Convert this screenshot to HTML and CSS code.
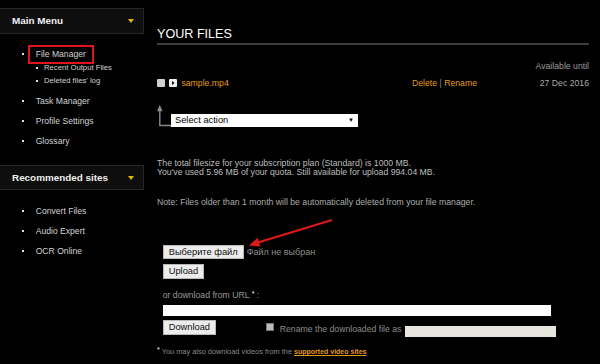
FILE: index.html
```html
<!DOCTYPE html>
<html lang="en">
<head>
<meta charset="utf-8">
<title>Your files</title>
<link rel="stylesheet" href="styles.css">
</head>
<body>
<aside class="sidebar">
  <section class="box">
    <h2 class="box-head">Main Menu <span class="caret"></span></h2>
    <ul class="menu">
      <li><a class="link marked">File Manager</a>
        <ul class="submenu">
          <li><a class="link">Recent Output Files</a></li>
          <li><a class="link">Deleted files' log</a></li>
        </ul>
      </li>
      <li><a class="link">Task Manager</a></li>
      <li><a class="link">Profile Settings</a></li>
      <li><a class="link">Glossary</a></li>
    </ul>
  </section>
  <section class="box">
    <h2 class="box-head">Recommended sites <span class="caret"></span></h2>
    <ul class="menu">
      <li><a class="link">Convert Files</a></li>
      <li><a class="link">Audio Expert</a></li>
      <li><a class="link">OCR Online</a></li>
    </ul>
  </section>
</aside>

<main class="content">
  <h1 class="title">YOUR FILES</h1>
  <div class="avail">Available until</div>
  <div class="file-row">
    <div class="file-left">
      <span class="cb"></span>
      <span class="play"><svg width="8" height="8" viewBox="0 0 8 8"><path d="M3 2 L5.5 4 L3 6 Z" fill="#000"/></svg></span>
      <a class="orange">sample.mp4</a>
    </div>
    <div class="actions"><a class="orange">Delete</a> <span class="sep">|</span> <a class="orange">Rename</a></div>
    <div class="date">27 Dec 2016</div>
  </div>
  <div class="bulk">
    <svg class="bulk-arrow" width="15" height="24" viewBox="0 0 15 24">
      <path d="M3 1 L6 8 L0 8 Z" fill="#8a8a8a"/>
      <path d="M3 7 V23.2 H15" fill="none" stroke="#8a8a8a" stroke-width="1.5"/>
    </svg>
    <div class="select">Select action <span class="sel-arrow">▼</span></div>
  </div>
  <p class="quota">The total filesize for your subscription plan (Standard) is 1000 MB.<br>You've used 5.96 MB of your quota. Still available for upload 994.04 MB.</p>
  <p class="note">Note: Files older than 1 month will be automatically deleted from your file manager.</p>

  <form class="upload">
    <div class="file-pick"><span class="btn">Выберите файл</span><span class="nofile">Файл не выбран</span></div>
    <div class="row-btn"><span class="btn">Upload</span></div>
    <div class="url-label">or download from URL <span class="star">*</span> :</div>
    <div class="url-input"></div>
    <div class="dl-row">
      <span class="btn btn-dl">Download</span>
      <span class="cb2"></span>
      <span class="rename-label">Rename the downloaded file as</span>
      <span class="rename-input"></span>
    </div>
    <div class="foot"><span class="star">*</span> You may also download videos from the <a class="sites">supported video sites</a></div>
  </form>

  <svg class="red-arrow" width="90" height="35" viewBox="0 0 90 35">
    <line x1="85" y1="5" x2="11" y2="27.5" stroke="#e01818" stroke-width="2"/>
    <path d="M2 30.5 L13.4 31.6 L10.6 22.8 Z" fill="#e01818"/>
  </svg>
</main>
</body>
</html>
```

FILE: styles.css
```css
html, body {
  margin: 0;
  padding: 0;
  background: #000;
}
body {
  display: flex;
  align-items: flex-start;
  font-family: "Liberation Sans", Arial, sans-serif;
  color: #bbb;
  width: 600px;
  height: 364px;
  overflow: hidden;
}

/* Sidebar */
.sidebar {
  width: 144px;
  flex: none;
  padding-top: 8px;
}
.box + .box {
  margin-top: 17px;
}
.box-head {
  margin: 0;
  height: 25.5px;
  box-sizing: border-box;
  border: 1px solid #262626;
  border-left: none;
  background: #0e0e0e;
  display: flex;
  align-items: center;
  justify-content: space-between;
  padding: 0 9px 0 12px;
  font-size: 9.9px;
  font-weight: bold;
  color: #eee;
}
.caret {
  width: 0;
  height: 0;
  border-left: 3px solid transparent;
  border-right: 3px solid transparent;
  border-top: 4px solid #e8b400;
}
.menu {
  list-style: none;
  margin: 0;
  padding: 13.5px 0 0 0;
}
.menu > li {
  position: relative;
  padding-left: 35.7px;
  line-height: 14px;
  font-size: 8.6px;
}
.menu > li + li {
  margin-top: 6px;
}
.menu > li::before {
  content: "";
  position: absolute;
  left: 22px;
  top: 6px;
  width: 2px;
  height: 2px;
  background: #ddd;
}
.link {
  color: #d2d2d2;
}
.marked {
  position: relative;
}
.marked::after {
  content: "";
  position: absolute;
  left: -8px;
  right: -8.5px;
  top: -4.5px;
  bottom: -5px;
  border: 2px solid #e0141c;
}
.submenu {
  list-style: none;
  margin: 0;
  padding: 0;
}
.submenu li {
  position: relative;
  padding-left: 8.3px;
  line-height: 13.4px;
  font-size: 7.7px;
}
.submenu li::before {
  content: "";
  position: absolute;
  left: 0.5px;
  top: 5.5px;
  width: 2px;
  height: 2px;
  background: #ddd;
}

/* Main content */
.content {
  position: relative;
  margin-left: 13px;
  width: 432px;
  font-size: 8.7px;
}
.title {
  margin: 26.5px 0 0 0;
  font-size: 12.6px;
  font-weight: normal;
  line-height: 15px;
  color: #fff;
  padding-bottom: 1px;
  border-bottom: 2px solid #3d3d3d;
}
.avail {
  margin-top: 16.5px;
  line-height: 11px;
  text-align: right;
  color: #9a9a9a;
}
.file-row {
  margin-top: 5px;
  display: grid;
  grid-template-columns: 1fr auto 112px;
  align-items: center;
  line-height: 12px;
}
.file-left {
  display: flex;
  align-items: center;
}
.cb {
  width: 7.5px;
  height: 7.5px;
  background: #cfcfcf;
  border-radius: 1px;
}
.play {
  margin-left: 4.3px;
  width: 8.3px;
  height: 8px;
  background: #eee;
  border-radius: 1px;
  display: flex;
}
.orange {
  color: #e39a1c;
}
.file-left .orange {
  margin-left: 4.3px;
}
.sep {
  color: #888;
}
.date {
  text-align: right;
  color: #aaa;
}
.bulk {
  margin-top: 14px;
  display: flex;
  align-items: flex-end;
  height: 24px;
}
.bulk-arrow {
  display: block;
  flex: none;
  width: 14px;
}
.select {
  width: 187px;
  height: 13px;
  box-sizing: border-box;
  background: #fff;
  color: #000;
  font-size: 9.3px;
  line-height: 13px;
  padding: 0 4px;
  display: flex;
  justify-content: space-between;
}
.sel-arrow {
  font-size: 6px;
}
.quota {
  margin: 32px 0 0 0;
  line-height: 9.4px;
  color: #bdbdbd;
}
.note {
  margin: 20.5px 0 0 0;
  line-height: 9.4px;
  color: #ababab;
}

/* Upload form */
.upload {
  margin: 37.5px 0 0 0;
  padding-left: 5.7px;
}
.btn {
  display: inline-flex;
  align-items: center;
  height: 14px;
  box-sizing: border-box;
  padding: 0 5px;
  background: #ececec;
  border: 1px solid #b8b8b8;
  color: #111;
  font-size: 9.3px;
}
.file-pick {
  display: flex;
  align-items: center;
}
.nofile {
  margin-left: 3px;
  color: #8c8c8c;
  font-size: 9px;
}
.row-btn {
  margin-top: 4.8px;
  display: flex;
}
.row-btn .btn {
  height: 14.5px;
}
.url-label {
  margin-top: 9px;
  line-height: 11px;
  color: #9a9a9a;
}
.star {
  color: #fff;
  font-size: 7px;
  vertical-align: 2px;
}
.url-input {
  margin-top: 4px;
  width: 388px;
  height: 11.3px;
  background: #fff;
}
.dl-row {
  margin-top: 4px;
  display: flex;
  align-items: flex-start;
}
.btn-dl {
  height: 15px;
}
.cb2 {
  margin: 3.4px 0 0 49.7px;
  width: 8px;
  height: 8px;
  box-sizing: border-box;
  border: 1px solid #777;
  background: #bbb;
}
.rename-label {
  margin: 4px 0 0 6px;
  line-height: 11px;
  color: #8c8c8c;
}
.rename-input {
  margin: 5.7px 0 0 3.3px;
  width: 151px;
  height: 11.3px;
  background: #e6e6df;
}
.foot {
  margin-top: 8.5px;
  line-height: 9px;
  font-size: 7.4px;
  color: #8a8a8a;
}
.foot .star {
  margin-left: -5.7px;
}
.sites {
  color: #e39a1c;
  font-weight: bold;
  font-size: 7px;
  text-decoration: underline;
}

/* annotation overlay */
.red-arrow {
  position: absolute;
  left: 90px;
  top: 215px;
}
```
